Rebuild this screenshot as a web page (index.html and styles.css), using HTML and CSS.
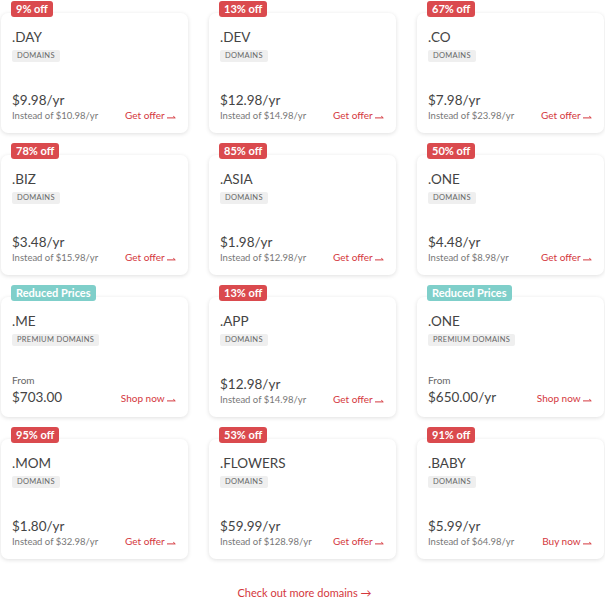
FILE: index.html
```html
<!DOCTYPE html>
<html>
<head>
<meta charset="utf-8">
<link rel="stylesheet" href="styles.css">
</head>
<body>
<div class="grid">
  <div class="card"><span class="badge">9% off</span><div class="name">.DAY</div><span class="tag">Domains</span>
    <div class="bottom"><div class="price">$9.98/yr</div><div class="row"><span class="was">Instead of $10.98/yr</span><a class="action">Get offer <svg class="arr" viewBox="0 0 10 6" width="10" height="6"><path d="M0 4H9M7 2.2L9.3 4"/></svg></a></div></div></div>
  <div class="card"><span class="badge">13% off</span><div class="name">.DEV</div><span class="tag">Domains</span>
    <div class="bottom"><div class="price">$12.98/yr</div><div class="row"><span class="was">Instead of $14.98/yr</span><a class="action">Get offer <svg class="arr" viewBox="0 0 10 6" width="10" height="6"><path d="M0 4H9M7 2.2L9.3 4"/></svg></a></div></div></div>
  <div class="card"><span class="badge">67% off</span><div class="name">.CO</div><span class="tag">Domains</span>
    <div class="bottom"><div class="price">$7.98/yr</div><div class="row"><span class="was">Instead of $23.98/yr</span><a class="action">Get offer <svg class="arr" viewBox="0 0 10 6" width="10" height="6"><path d="M0 4H9M7 2.2L9.3 4"/></svg></a></div></div></div>

  <div class="card"><span class="badge">78% off</span><div class="name">.BIZ</div><span class="tag">Domains</span>
    <div class="bottom"><div class="price">$3.48/yr</div><div class="row"><span class="was">Instead of $15.98/yr</span><a class="action">Get offer <svg class="arr" viewBox="0 0 10 6" width="10" height="6"><path d="M0 4H9M7 2.2L9.3 4"/></svg></a></div></div></div>
  <div class="card"><span class="badge">85% off</span><div class="name">.ASIA</div><span class="tag">Domains</span>
    <div class="bottom"><div class="price">$1.98/yr</div><div class="row"><span class="was">Instead of $12.98/yr</span><a class="action">Get offer <svg class="arr" viewBox="0 0 10 6" width="10" height="6"><path d="M0 4H9M7 2.2L9.3 4"/></svg></a></div></div></div>
  <div class="card"><span class="badge">50% off</span><div class="name">.ONE</div><span class="tag">Domains</span>
    <div class="bottom"><div class="price">$4.48/yr</div><div class="row"><span class="was">Instead of $8.98/yr</span><a class="action">Get offer <svg class="arr" viewBox="0 0 10 6" width="10" height="6"><path d="M0 4H9M7 2.2L9.3 4"/></svg></a></div></div></div>

  <div class="card"><span class="badge teal">Reduced Prices</span><div class="name">.ME</div><span class="tag">Premium Domains</span>
    <div class="bottom"><div class="from">From</div><div class="row"><span class="price">$703.00</span><a class="action">Shop now <svg class="arr" viewBox="0 0 10 6" width="10" height="6"><path d="M0 4H9M7 2.2L9.3 4"/></svg></a></div></div></div>
  <div class="card"><span class="badge">13% off</span><div class="name">.APP</div><span class="tag">Domains</span>
    <div class="bottom"><div class="price">$12.98/yr</div><div class="row"><span class="was">Instead of $14.98/yr</span><a class="action">Get offer <svg class="arr" viewBox="0 0 10 6" width="10" height="6"><path d="M0 4H9M7 2.2L9.3 4"/></svg></a></div></div></div>
  <div class="card"><span class="badge teal">Reduced Prices</span><div class="name">.ONE</div><span class="tag">Premium Domains</span>
    <div class="bottom"><div class="from">From</div><div class="row"><span class="price">$650.00/yr</span><a class="action">Shop now <svg class="arr" viewBox="0 0 10 6" width="10" height="6"><path d="M0 4H9M7 2.2L9.3 4"/></svg></a></div></div></div>

  <div class="card"><span class="badge">95% off</span><div class="name">.MOM</div><span class="tag">Domains</span>
    <div class="bottom"><div class="price">$1.80/yr</div><div class="row"><span class="was">Instead of $32.98/yr</span><a class="action">Get offer <svg class="arr" viewBox="0 0 10 6" width="10" height="6"><path d="M0 4H9M7 2.2L9.3 4"/></svg></a></div></div></div>
  <div class="card"><span class="badge">53% off</span><div class="name">.FLOWERS</div><span class="tag">Domains</span>
    <div class="bottom"><div class="price">$59.99/yr</div><div class="row"><span class="was">Instead of $128.98/yr</span><a class="action">Get offer <svg class="arr" viewBox="0 0 10 6" width="10" height="6"><path d="M0 4H9M7 2.2L9.3 4"/></svg></a></div></div></div>
  <div class="card"><span class="badge">91% off</span><div class="name">.BABY</div><span class="tag">Domains</span>
    <div class="bottom"><div class="price">$5.99/yr</div><div class="row"><span class="was">Instead of $64.98/yr</span><a class="action">Buy now <svg class="arr" viewBox="0 0 10 6" width="10" height="6"><path d="M0 4H9M7 2.2L9.3 4"/></svg></a></div></div></div>
</div>
<div class="more"><a class="more-link">Check out more domains →</a></div>
</body>
</html>
```

FILE: styles.css
```css
html, body {
  margin: 0;
  padding: 0;
  background: #fff;
}
body {
  font-family: Lato, "Open Sans", sans-serif;
  color: #333;
}
.grid {
  display: grid;
  grid-template-columns: 187px 187px 187px;
  column-gap: 21px;
  row-gap: 22px;
  padding: 13px 0 0 1px;
}
.card {
  position: relative;
  height: 120px;
  box-sizing: border-box;
  padding: 16px 11px 11px 11px;
  background: #fff;
  border-radius: 7px;
  box-shadow: 0 1px 4px rgba(0, 0, 0, 0.13);
  display: flex;
  flex-direction: column;
  align-items: flex-start;
}
.badge {
  position: absolute;
  top: -12px;
  left: 10px;
  height: 16px;
  line-height: 16px;
  padding: 0 5px;
  border-radius: 3px;
  background: #da4a4e;
  color: #fff;
  font-weight: 700;
  font-size: 11px;
}
.badge.teal {
  background: #7fcfca;
}
.name {
  font-size: 13.5px;
  line-height: 17px;
  color: #444;
}
.tag {
  margin-top: 4px;
  height: 12px;
  line-height: 12px;
  padding: 0 5px;
  background: #efefef;
  border-radius: 2px;
  color: #666;
  font-size: 7.5px;
  text-transform: uppercase;
  letter-spacing: 0.3px;
}
.bottom {
  margin-top: auto;
  width: 100%;
}
.price {
  font-size: 13.5px;
  line-height: 17px;
  color: #444;
}
.from {
  font-size: 10px;
  line-height: 13px;
  color: #666;
  margin-bottom: 2px;
}
.row {
  display: flex;
  justify-content: space-between;
  align-items: baseline;
}
.was {
  font-size: 9.5px;
  line-height: 13px;
  color: #777;
}
.action {
  font-size: 10px;
  line-height: 13px;
  color: #d4373d;
  padding-right: 1px;
}
.arr {
  width: 9px;
  height: 6px;
  fill: none;
  stroke: #d4373d;
  stroke-width: 1.1;
  vertical-align: -1px;
}
.more {
  text-align: center;
  margin-top: 22px;
}
.more-link {
  color: #d4373d;
  font-size: 11px;
  line-height: 14px;
  padding-left: 4px;
}
```
